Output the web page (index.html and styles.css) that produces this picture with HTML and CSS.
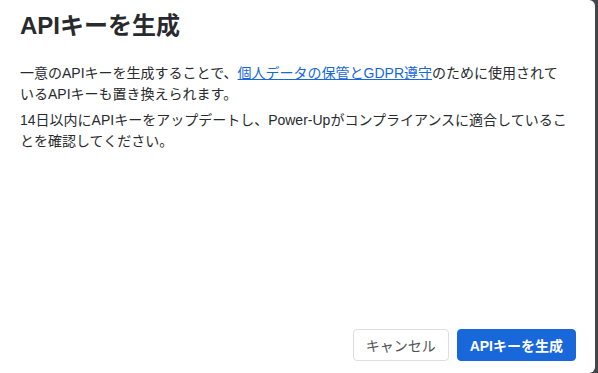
FILE: index.html
```html
<!DOCTYPE html>
<html>
<head>
    <link rel="stylesheet" href="styles.css">
</head>
<body>
    <div class="modal">
        <h1 class="modal-title">APIキーを生成</h1>
        <div class="modal-body">
            <p>一意のAPIキーを生成することで、<a href="#">個人データの保管とGDPR遵守</a>のために使用されているAPIキーも置き換えられます。</p>
            <p>14日以内にAPIキーをアップデートし、Power-Upがコンプライアンスに適合していることを確認してください。</p>
        </div>
        <div class="modal-footer">
            <button class="btn btn-subtle">キャンセル</button>
            <button class="btn btn-primary">APIキーを生成</button>
        </div>
    </div>
</body>
</html>
```

FILE: styles.css
```css
* {
    box-sizing: border-box;
    margin: 0;
    padding: 0;
}

html, body {
    height: 100%;
}

body {
    font-family: "Liberation Sans", "Noto Sans CJK JP", sans-serif;
    background-color: #444548;
    color: #292a2e;
    overflow: hidden;
}

.modal {
    width: 595px;
    height: 373px;
    background: white;
    border-radius: 0 6px 6px 0;
    padding: 8px 20px 12px 20px;
    display: flex;
    flex-direction: column;
}

.modal-title {
    font-size: 24px;
    font-weight: 700;
    line-height: 36px;
    margin-bottom: 19px;
}

.modal-body {
    flex: 1;
    font-size: 14px;
    line-height: 21px;
    padding-right: 7px;
}

.modal-body p {
    margin-bottom: 5px;
}

.modal-body a {
    color: #1868db;
    text-decoration: underline;
}

.modal-footer {
    display: flex;
    justify-content: flex-end;
    gap: 8px;
    margin-right: -1px;
}

.btn {
    font-family: inherit;
    font-size: 14px;
    height: 32px;
    padding: 0 12px;
    border-radius: 4px;
    cursor: pointer;
}

.btn-subtle {
    background: white;
    color: #505258;
    border: 1px solid #dddee1;
}

.btn-primary {
    background: #1868db;
    color: white;
    border: 1px solid #1868db;
    font-weight: 700;
}
```
